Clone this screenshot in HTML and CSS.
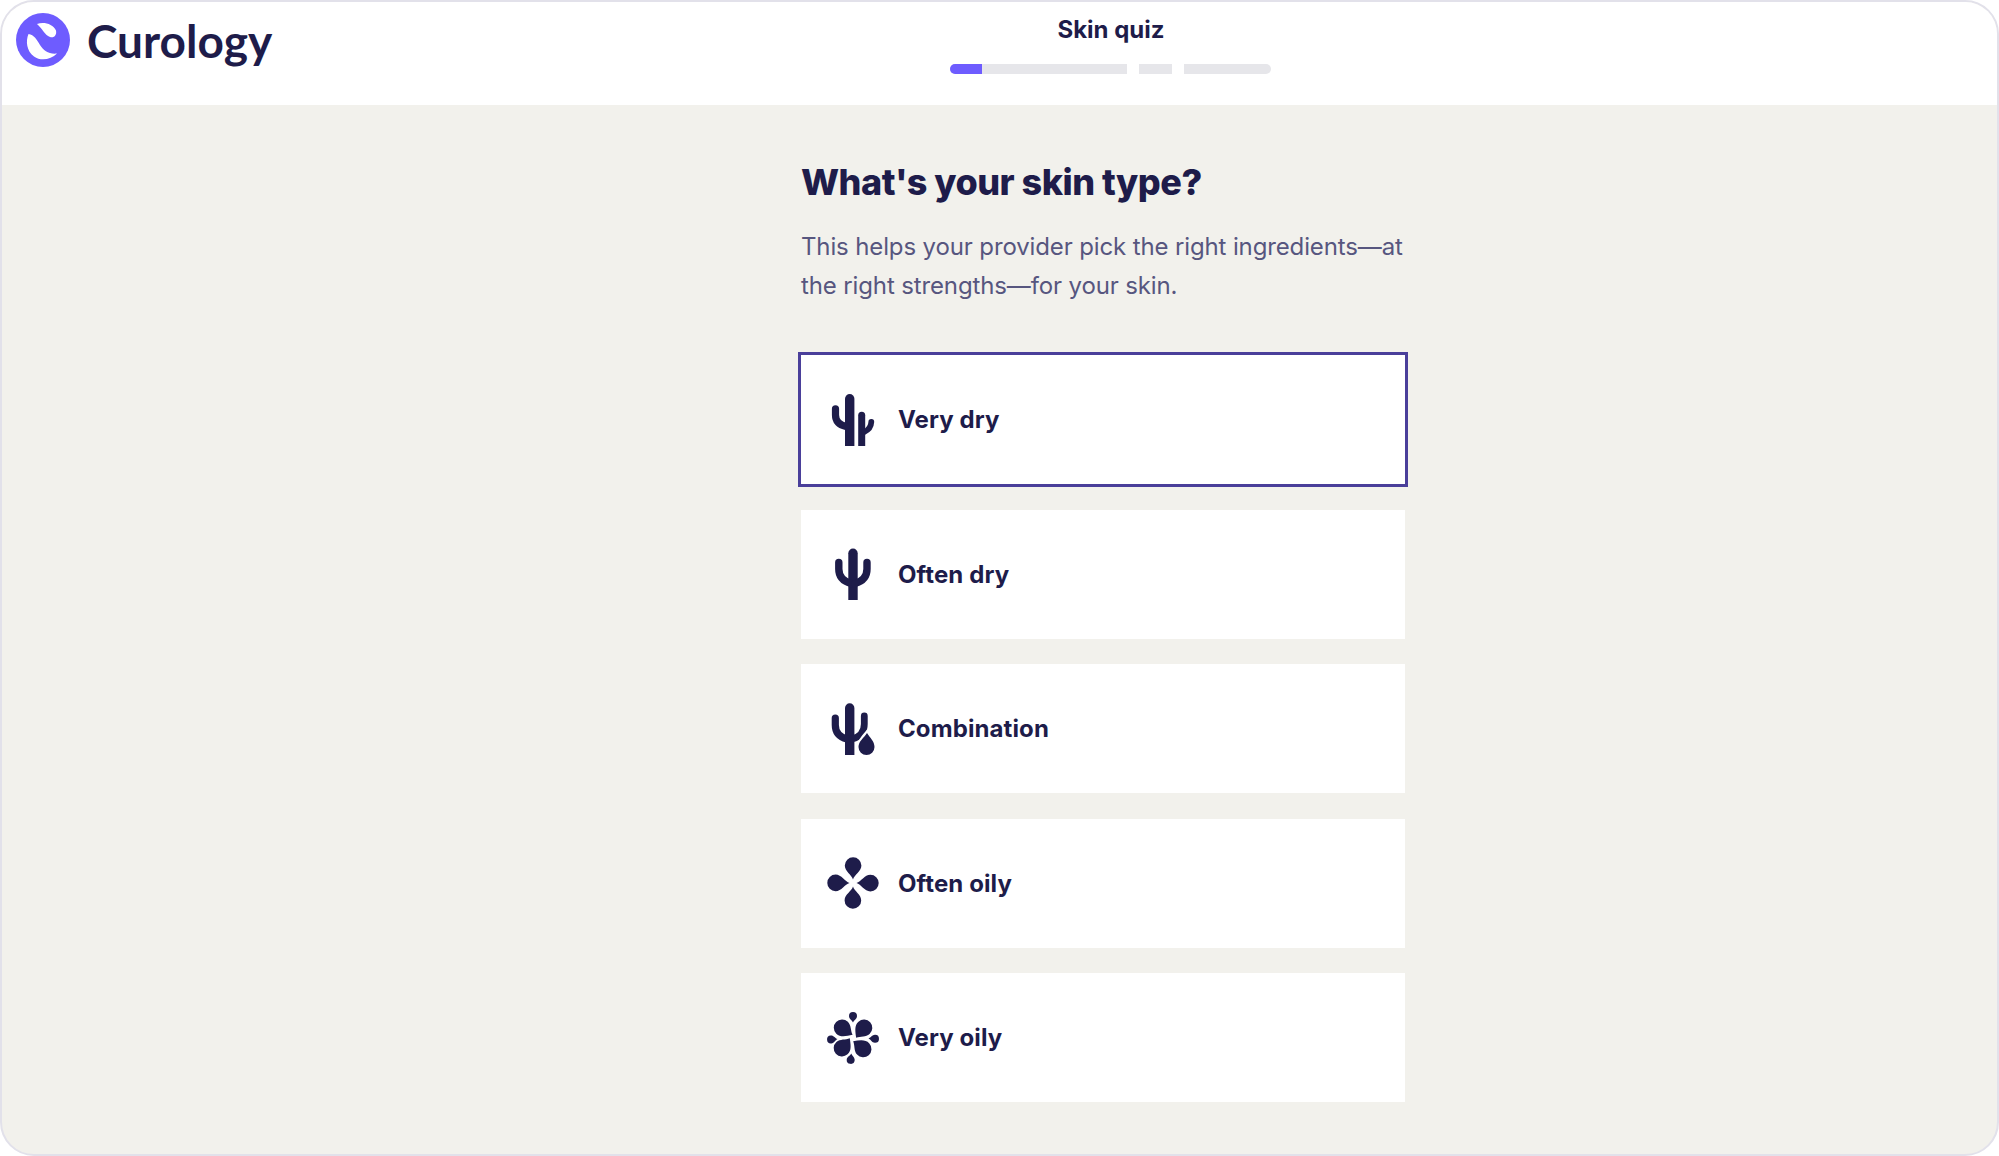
FILE: index.html
```html
<!DOCTYPE html>
<html lang="en">
<head>
    <meta charset="UTF-8">
    <meta name="viewport" content="width=device-width, initial-scale=1.0">
    <title>Skin quiz</title>
    <link rel="stylesheet" href="styles.css">
</head>
<body>
    <svg class="defs" width="0" height="0" aria-hidden="true">
        <defs>
            <path id="drop" d="M27 23.500C25.800 19 18.800 15.500 18.800 9.600a8.300 8.300 0 0 1 16.600 0C35.400 15.500 28.200 19 27 23.500z"/>
            <path id="bigdrop" d="M29 24.500C24 21 18.500 18 18.500 12a8.300 8.300 0 0 1 16.600 0C35.100 17 30.500 20 29 24.500z"/>
            <path id="tinydrop" d="M27 11.500C26 9 23 8 23 5a4 4 0 0 1 8 0C31 8 28 9 27 11.500z"/>
        </defs>
    </svg>
    <div class="frame">
        <header class="top">
            <div class="brand">
                <svg class="logo" viewBox="0 0 54 54">
                    <circle cx="27" cy="27" r="27" fill="#6e5cff"/>
                    <path fill="#fff" d="M12.500 21C9.500 28 10.500 38 18 43.500C25 48.500 35 46.500 41 40.500C33 41.500 27.500 37.500 24 32C21 27 18 21.500 12.500 21z"/>
                    <path fill="#fff" d="M21 11C28 8.500 37 11 40 17.500C41 22 38 25.500 34 24C28.500 22 26 15 21 11z"/>
                </svg>
                <span class="wordmark">Curology</span>
            </div>
            <div class="quiz">
                <h2>Skin quiz</h2>
                <div class="steps">
                    <div class="step first"><div class="fill"></div></div>
                    <div class="step mid"></div>
                    <div class="step last"></div>
                </div>
            </div>
        </header>
        <main class="content">
            <h1>What's your skin type?</h1>
            <p>This helps your provider pick the right ingredients—at the right strengths—for your skin.</p>
            <div class="options">
                <div class="option selected">
                    <svg class="icon" viewBox="0 0 54 54">
                        <g fill="none" stroke="#1e1c4a">
                            <path stroke-width="9.400" stroke-linecap="round" d="M23.700 5.800V60"/>
                            <path stroke-width="7.200" stroke-linecap="round" d="M9.500 15.800V22Q9.500 31 20 33.500"/>
                            <path stroke-width="7" stroke-linecap="round" d="M35.700 22.300V60"/>
                            <path stroke-width="5.800" stroke-linecap="round" d="M45.300 29Q45 36 38 39"/>
                        </g>
                        <rect x="0" y="53" width="54" height="10" fill="#fff"/>
                    </svg>
                    <span>Very dry</span>
                </div>
                <div class="option">
                    <svg class="icon" viewBox="0 0 54 54">
                        <g fill="none" stroke="#1e1c4a" stroke-linecap="round">
                            <path stroke-width="9.400" d="M27 6.300V60"/>
                            <path stroke-width="7.400" d="M12.800 15.500V22Q12.800 33 25 36.500"/>
                            <path stroke-width="7.400" d="M41 15.500V22Q41 33 29 36.500"/>
                        </g>
                        <rect x="0" y="53" width="54" height="10" fill="#fff"/>
                    </svg>
                    <span>Often dry</span>
                </div>
                <div class="option">
                    <svg class="icon" viewBox="0 0 54 54">
                        <g fill="none" stroke="#1e1c4a" stroke-linecap="round">
                            <path stroke-width="9.400" d="M23.700 6V60"/>
                            <path stroke-width="7.200" d="M9.300 16V23Q9.300 34 21 37"/>
                            <path stroke-width="6.800" d="M38.300 14V22Q38.300 34 26 37"/>
                        </g>
                        <rect x="0" y="53" width="54" height="10" fill="#fff"/>
                        <path fill="#fff" d="M41 27.500C45 33 51 38 51 45a10 10 0 0 1-20 0C31 38 37 33 41 27.500z"/>
                        <path fill="#1e1c4a" d="M41 31C44 36 48.500 39 48.500 45a8 8 0 0 1-16 0C32.500 39 38 36 41 31z"/>
                    </svg>
                    <span>Combination</span>
                </div>
                <div class="option">
                    <svg class="icon" viewBox="0 0 54 54" fill="#1e1c4a">
                        <use href="#drop"/>
                        <use href="#drop" transform="rotate(90 27 27)"/>
                        <use href="#drop" transform="rotate(180 27 27)"/>
                        <use href="#drop" transform="rotate(270 27 27)"/>
                    </svg>
                    <span>Often oily</span>
                </div>
                <div class="option">
                    <svg class="icon" viewBox="0 0 54 54" fill="#1e1c4a">
                        <use href="#bigdrop" transform="rotate(48 27 27)"/>
                        <use href="#bigdrop" transform="rotate(138 27 27)"/>
                        <use href="#bigdrop" transform="rotate(228 27 27)"/>
                        <use href="#bigdrop" transform="rotate(-46 27 27)"/>
                        <use href="#tinydrop"/>
                        <use href="#tinydrop" transform="rotate(92 27 27)"/>
                        <use href="#tinydrop" transform="rotate(186 27 27)"/>
                        <use href="#tinydrop" transform="rotate(266 27 27)"/>
                    </svg>
                    <span>Very oily</span>
                </div>
            </div>
        </main>
    </div>
</body>
</html>
```

FILE: styles.css
```css
html, body {
    height: 100%;
}
body {
    margin: 0;
    background-color: #fff;
    color: #1e1c4a;
    font-family: Inter, "Liberation Sans", sans-serif;
}
.defs {
    position: absolute;
}
.frame {
    box-sizing: border-box;
    height: 1156px;
    border: 2px solid #e2e1ea;
    border-radius: 34px;
    background-color: #f2f1ec;
    overflow: hidden;
}
.top {
    display: flex;
    height: 103px;
    background-color: #fff;
}
.brand {
    display: flex;
    align-items: flex-start;
    width: 948px;
    padding: 11px 0 0 14px;
    box-sizing: border-box;
}
.logo {
    width: 54px;
    height: 54px;
}
.wordmark {
    margin: 0 0 0 17px;
    font-family: Lato, sans-serif;
    font-size: 46px;
    line-height: 56px;
    font-weight: 700;
}
.quiz {
    width: 322px;
}
.quiz h2 {
    margin: 13px 0 0;
    font-size: 24px;
    line-height: 30px;
    font-weight: 700;
    text-align: center;
}
.steps {
    display: flex;
    gap: 12px;
    margin-top: 19px;
}
.step {
    height: 10px;
    background-color: #e6e6ea;
}
.step.first {
    width: 177px;
    border-radius: 5px 0 0 5px;
    overflow: hidden;
}
.step.mid {
    width: 33px;
}
.step.last {
    width: 87px;
    border-radius: 0 5px 5px 0;
}
.fill {
    width: 32px;
    height: 10px;
    background-color: #6e5cff;
}
.content {
    width: 604px;
    margin-left: 799px;
    padding-top: 55px;
}
.content h1 {
    margin: 0;
    font-size: 36px;
    line-height: 44px;
    font-weight: 800;
    letter-spacing: -0.5px;
}
.content p {
    margin: 24px 0 0;
    color: #57567f;
    font-size: 24px;
    line-height: 38.500px;
    letter-spacing: -0.13px;
}
.options {
    display: flex;
    flex-direction: column;
    gap: 25.500px;
    margin-top: 50px;
}
.option {
    display: flex;
    align-items: center;
    gap: 18px;
    height: 129px;
    padding-left: 25px;
    background-color: #fff;
    font-size: 24px;
    font-weight: 700;
    letter-spacing: 0.1px;
}
.option.selected {
    outline: 3px solid #4a3f9a;
}
.icon {
    flex: none;
    width: 54px;
    height: 54px;
}
```
